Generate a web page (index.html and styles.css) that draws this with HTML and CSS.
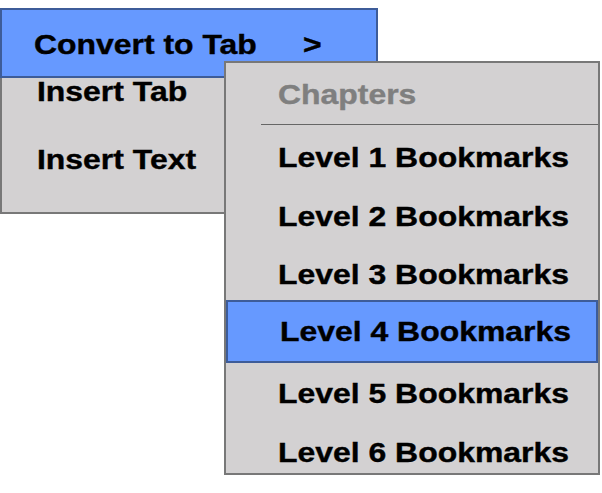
FILE: index.html
```html
<!DOCTYPE html>
<html>
<head>
<meta charset="utf-8">
<link rel="stylesheet" href="styles.css">
</head>
<body>
<div class="menu">
  <div class="menu-head">
    <span class="label">Convert to Tab</span><span class="label arrow">&gt;</span>
  </div>
  <ul class="menu-items">
    <li class="item"><span class="label">Insert Tab</span></li>
    <li class="item item-second"><span class="label">Insert Text</span></li>
  </ul>
</div>
<div class="submenu">
  <div class="sub-title"><span class="label">Chapters</span></div>
  <div class="sub-sep"></div>
  <ul class="sub-items">
    <li class="sub-item"><span class="label">Level 1 Bookmarks</span></li>
    <li class="sub-item"><span class="label">Level 2 Bookmarks</span></li>
    <li class="sub-item sub-item-short"><span class="label">Level 3 Bookmarks</span></li>
    <li class="sub-item is-active"><span class="label">Level 4 Bookmarks</span></li>
    <li class="sub-item sub-item-tall"><span class="label">Level 5 Bookmarks</span></li>
    <li class="sub-item"><span class="label">Level 6 Bookmarks</span></li>
  </ul>
</div>
</body>
</html>
```

FILE: styles.css
```css
html, body {
  margin: 0;
  padding: 0;
  background: #ffffff;
}
body {
  padding-top: 8px;
  position: relative;
  width: 602px;
  height: 485px;
  font-family: "Liberation Sans", Arial, Helvetica, sans-serif;
  font-weight: bold;
  font-size: 28px;
  color: #000;
}
ul {
  list-style: none;
  margin: 0;
  padding: 0;
}
.label {
  display: inline-block;
  transform: scaleX(1.14);
  transform-origin: left center;
  white-space: nowrap;
  -webkit-text-stroke: 0.4px currentColor;
}
.menu {
  width: 378px;
  box-sizing: border-box;
  background: #d3d1d2;
  border: 2px solid #787878;
  border-top: 0;
}
.menu-head {
  margin: 0 -2px;
  height: 70px;
  box-sizing: border-box;
  background: #6699ff;
  border: 2px solid #3d5c99;
  padding: 15px 0 0 32px;
  line-height: 40px;
  display: flex;
}
.arrow {
  margin-left: 74px;
}
.menu-items {
  padding: 0 0 38px 35px;
}
.item {
  line-height: 28px;
}
.item-second {
  margin-top: 40px;
}
.submenu {
  position: absolute;
  left: 224px;
  top: 61px;
  width: 376px;
  height: 414px;
  box-sizing: border-box;
  background: #d3d1d2;
  border: 2px solid #787878;
  overflow: hidden;
}
.sub-title {
  padding: 12px 0 0 52px;
  line-height: 40px;
  color: #7f7f7f;
}
.sub-sep {
  margin: 9px 0 0 35px;
  border-top: 1px solid #666;
}
.sub-items {
  margin-top: 3px;
}
.sub-item {
  line-height: 59px;
  padding-left: 52px;
}
.sub-item-short {
  line-height: 54px;
  padding-top: 2px;
}
.sub-item-tall {
  line-height: 58px;
  padding-top: 4px;
}
.sub-item.is-active {
  background: #6699ff;
  border: 2px solid #3d5c99;
  margin: -2px 0;
  padding-left: 52px;
}
```
